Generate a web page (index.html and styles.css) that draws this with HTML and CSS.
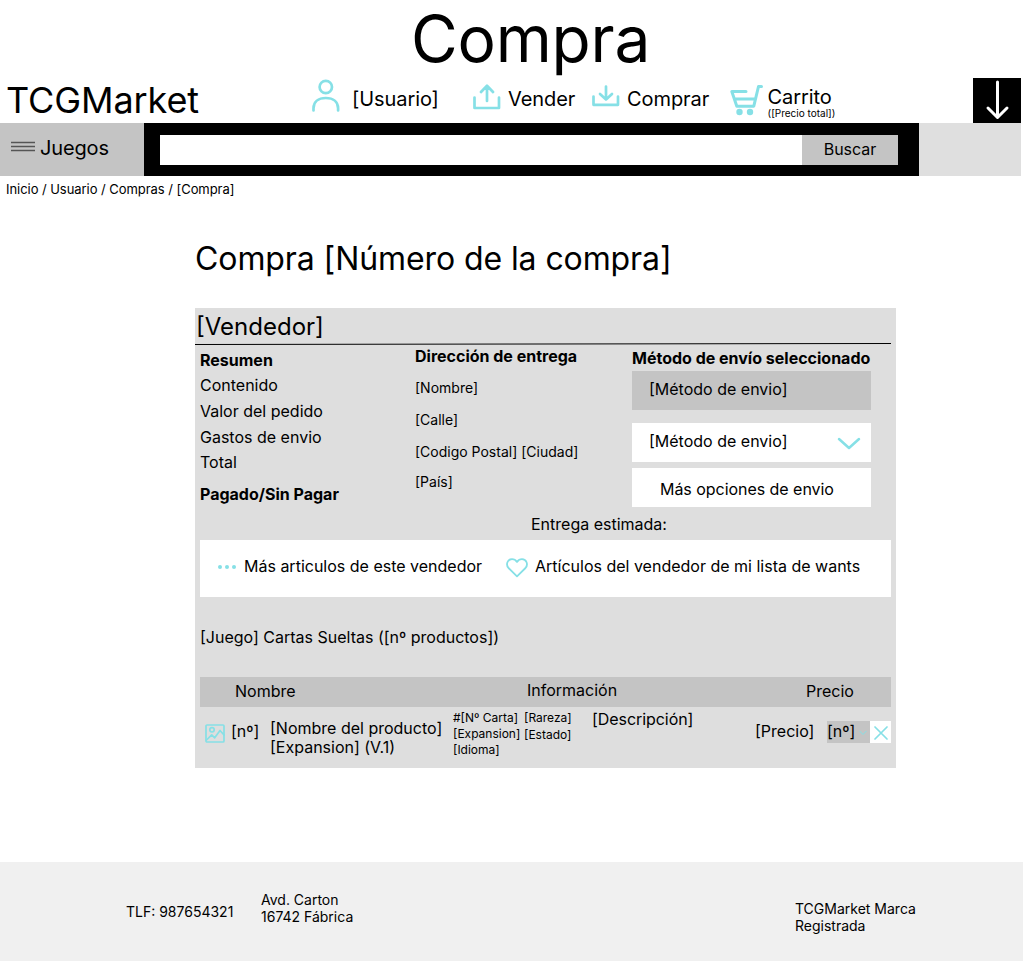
FILE: index.html
```
<!DOCTYPE html>
<html lang="es">
<head>
<meta charset="utf-8">
<title>Compra - TCGMarket</title>
<link rel="stylesheet" href="styles.css">
</head>
<body>
<div class="page-title">Compra</div>
<header class="header">
  <div class="brand">TCGMarket</div>
  <a class="nav user"><svg width="28" height="34" viewBox="0 0 28 34"><circle cx="13.8" cy="9" r="6.2"/><path d="M1.5 32.5v-2.2c0-6.5 4.8-10.3 12.3-10.3s12.3 3.800 12.300 10.300v2.200"/></svg><span>[Usuario]</span></a>
  <a class="nav sell"><svg width="28" height="26" viewBox="0 0 28 26"><path d="M1.500 13.500v10.500h24.500V13.500M14 17V2M8 8l6-6.300 6 6.300"/></svg><span>Vender</span></a>
  <a class="nav buy"><svg width="28" height="22" viewBox="0 0 28 22"><path d="M1.500 11.500v8.300h24.500v-8.300M14 1.500v13M8 9l6 5.500 6-5.500"/></svg><span>Comprar</span></a>
  <a class="nav cart"><svg width="33" height="32" viewBox="0 0 33 32"><path d="M16 7.500H1.800l5 14.700h17L28.500 2.500h3M4.500 15h20"/><circle class="solid" cx="9.500" cy="28" r="3.200"/><circle class="solid" cx="20" cy="28" r="3.200"/></svg><span class="cart-text"><span>Carrito</span><small>([Precio total])</small></span></a>
  <div class="down"><svg width="48" height="45" viewBox="0 0 48 45"><path d="M24.500 4v35M15 30l9.500 9.500L34 30"/></svg></div>
</header>
<nav class="bar">
  <div class="games"><svg width="24" height="11" viewBox="0 0 24 11"><path d="M0 1.500h24M0 5.500h24M0 9.500h24"/></svg><span>Juegos</span></div>
  <div class="search"><div class="field"></div><div class="button">Buscar</div></div>
</nav>
<div class="crumbs">Inicio / Usuario / Compras / [Compra]</div>
<h1>Compra [Número de la compra]</h1>
<main class="panel">
  <h2>[Vendedor]</h2>
  <svg class="rule" width="696" height="3" viewBox="0 0 696 3"><path d="M0 2.500L696 1.500"/></svg>
  <div class="details">
    <div class="summary"><b>Resumen</b><p>Contenido</p><p>Valor del pedido</p><p>Gastos de envio</p><p>Total</p><b class="paid">Pagado/Sin Pagar</b></div>
    <div class="address"><b>Dirección de entrega</b><p>[Nombre]</p><p>[Calle]</p><p>[Codigo Postal] [Ciudad]</p><p>[País]</p></div>
    <div class="shipping"><b>Método de envío seleccionado</b>
      <div class="option chosen">[Método de envio]</div>
      <div class="option pick"><span>[Método de envio]</span><svg width="24" height="14" viewBox="0 0 24 14"><path d="M2 2l10 9 10-9"/></svg></div>
      <div class="option more">Más opciones de envio</div></div>
  </div>
  <div class="estimate">Entrega estimada:</div>
  <div class="seller-links">
    <svg class="dots" width="18" height="6" viewBox="0 0 18 6"><circle class="solid" cx="2" cy="3" r="2"/><circle class="solid" cx="9" cy="3" r="2"/><circle class="solid" cx="16" cy="3" r="2"/></svg>
    <span class="more-items">Más articulos de este vendedor</span>
    <svg class="heart" width="22" height="20" viewBox="0 0 22 20"><path d="M11 18.300L2.500 10C-.5 6.500 1.500 1.200 6 1.200c2.200 0 3.800 1 5 2.700 1.200-1.700 2.800-2.700 5-2.700 4.500 0 6.500 5.300 3.500 8.800z"/></svg>
    <span>Artículos del vendedor de mi lista de wants</span>
  </div>
  <h3>[Juego] Cartas Sueltas ([nº productos])</h3>
  <div class="columns"><span>Nombre</span><span class="info">Información</span><span>Precio</span></div>
  <div class="item">
    <svg class="picture" width="20" height="19" viewBox="0 0 20 19"><rect x="1" y="1" width="18" height="17" rx="1"/><circle cx="7" cy="5.800" r="2.200"/><path d="M1.500 16l5.200-5.200 3 3 5.300-7.300 4 4.500"/></svg>
    <span class="count">[nº]</span>
    <div class="product">[Nombre del producto]<br>[Expansion] (V.1)</div>
    <div class="meta">#[Nº Carta]<br>[Expansion]<br>[Idioma]</div>
    <div class="meta rarity">[Rareza]<br>[Estado]</div>
    <span class="description">[Descripción]</span>
    <span class="price">[Precio]</span>
    <div class="quantity"><span>[nº]</span><svg width="8" height="6" viewBox="0 0 8 6"><path d="M.8 1.200L4 4.500l3.200-3.300"/></svg></div>
    <div class="remove"><svg width="14" height="14" viewBox="0 0 14 14"><path d="M1 1l12 12M13 1L1 13"/></svg></div>
  </div>
</main>
<footer class="footer">
  <div class="phone">TLF: 987654321</div>
  <div class="street">Avd. Carton<br>16742 Fábrica</div>
  <div class="mark">TCGMarket Marca<br>Registrada</div>
</footer>
</body>
</html>
```
FILE: styles.css
```
* { box-sizing: border-box; }
body { margin: 0; background: #fff; color: #000; font: 16px/20px Inter, sans-serif; white-space: nowrap; overflow: hidden; }
h1, h2, h3, p { margin: 0; font-weight: 400; }
b { display: block; font-weight: 700; }
svg { display: block; flex: none; fill: none; stroke: #86e0e6; stroke-width: 2.7; stroke-linecap: round; stroke-linejoin: round; }
.solid { fill: #86e0e6; stroke: none; }

.page-title { height: 78px; padding-left: 411px; font-size: 64px; line-height: 78px; letter-spacing: -.2px; }
.header { display: grid; grid-template-columns: 312px 161px 119px 138px 243px 48px; height: 45px; }
.brand { padding-left: 6px; font-size: 36px; line-height: 44px; letter-spacing: -.1px; }
.nav { display: flex; align-items: flex-start; font-size: 20px; line-height: 24px; letter-spacing: -.08px; }
.nav > span { margin-top: 9px; }
.user { gap: 12px; }
.sell { gap: 7px; }
.sell svg { margin-top: 6px; }
.buy { gap: 7px; }
.buy svg { margin-top: 7px; }
.cart { gap: 4.5px; }
.cart svg { margin-top: 6px; stroke-width: 3; }
.nav .cart-text { display: grid; margin-top: 9px; line-height: 20px; }
.cart-text small { font-size: 10px; line-height: 12px; letter-spacing: 0; }
.down { background: #000; }
.down svg { stroke: #fff; stroke-width: 3; }

.bar { display: flex; width: 1021px; height: 53px; background: #dfdfdf; }
.games { display: flex; width: 144px; padding: 15px 0 0 11px; gap: 5px; background: #c4c4c4; font-size: 20px; letter-spacing: -.15px; }
.games svg { margin-top: 3px; stroke: #555; stroke-width: 1.5; stroke-linecap: butt; }
.search { display: flex; width: 775px; padding: 12px 21px 11px 15.5px; background: #000; }
.field { flex: 1; background: #fff; }
.button { width: 96px; background: #c4c4c4; text-align: center; line-height: 29px; }
.crumbs { padding: 3px 0 0 6px; font-size: 13px; letter-spacing: -.05px; }
h1 { margin: 40px 0 0 195px; font-size: 32px; line-height: 40px; letter-spacing: -.09px; }

.panel { width: 701px; height: 460px; margin: 29px 0 0 195px; background: #dedede; }
h2 { padding: 3px 0 0 1px; margin-bottom: -1px; font-size: 24px; line-height: 32px; }
.rule { stroke: #000; stroke-width: 1; stroke-linecap: butt; }
.details { display: grid; grid-template-columns: 215px 217px 239px; height: 170px; padding-left: 5px; }
.summary { padding-top: 5px; }
.summary p { margin-bottom: 5.800px; }
.summary b + p { margin-top: 5px; }
.summary .paid { margin-top: 12px; }
.address { padding-top: 1px; }
.address p { margin-top: 12px; font-size: 14px; line-height: 20px; }
.address p:last-child { margin-top: 10px; }
.shipping { padding-top: 3px; }
.option { height: 39px; padding-left: 17px; background: #fff; line-height: 37px; }
.chosen { margin: 3px 0 13px; background: #c4c4c4; }
.pick { display: flex; justify-content: space-between; padding-right: 10px; margin-bottom: 6px; }
.pick svg { margin-top: 14px; stroke-width: 2.5; }
.more { padding-left: 28px; line-height: 43px; letter-spacing: -.04px; }
.estimate { height: 26px; padding-left: 336px; margin-top: -1px; }
.seller-links { display: flex; width: 691px; height: 57px; margin-left: 5px; padding-left: 18px; background: #fff; line-height: 53px; }
.dots { margin: 24px 8px 0 0; }
.more-items { width: 262px; }
.heart { margin: 18px 7px 0 0; stroke-width: 1.8; }
h3 { padding: 30px 0 29px 5px; font-size: 16px; line-height: 21px; }
.columns { display: grid; grid-template-columns: 292px 279px 85px; width: 691px; height: 30px; margin-left: 5px; padding-left: 35px; background: #c4c4c4; line-height: 28px; }
.info { line-height: 26px; }
.item { display: grid; grid-template-columns: 26px 39px 183px 71px 68px 163px 72px 43px 21px; align-items: start; width: 686px; margin-left: 10px; }
.picture { margin-top: 17px; stroke-width: 1.7; }
.count, .price { margin-top: 14px; }
.product { margin-top: 12px; line-height: 19px; }
.meta { margin-top: 3px; font-size: 12px; line-height: 16px; }
.rarity { margin-top: 2px; line-height: 17px; }
.description { margin-top: 2px; letter-spacing: -.06px; }
.quantity { display: flex; height: 22px; margin-top: 14px; gap: 4px; background: #c4c4c4; line-height: 20px; }
.quantity svg { margin-top: 9px; stroke-width: 1; }
.remove { height: 22px; margin-top: 14px; padding: 5px 0 0 4px; background: #fff; }
.remove svg { stroke-width: 1.700; }

.footer { display: grid; grid-template-columns: 135px 534px 200px; width: 1023px; height: 99px; margin-top: 94px; padding-left: 126px; background: #f0f0f0; font-size: 14px; line-height: 17px; }
.phone { padding-top: 41px; }
.street { padding-top: 29px; }
.mark { padding-top: 38px; }
```
